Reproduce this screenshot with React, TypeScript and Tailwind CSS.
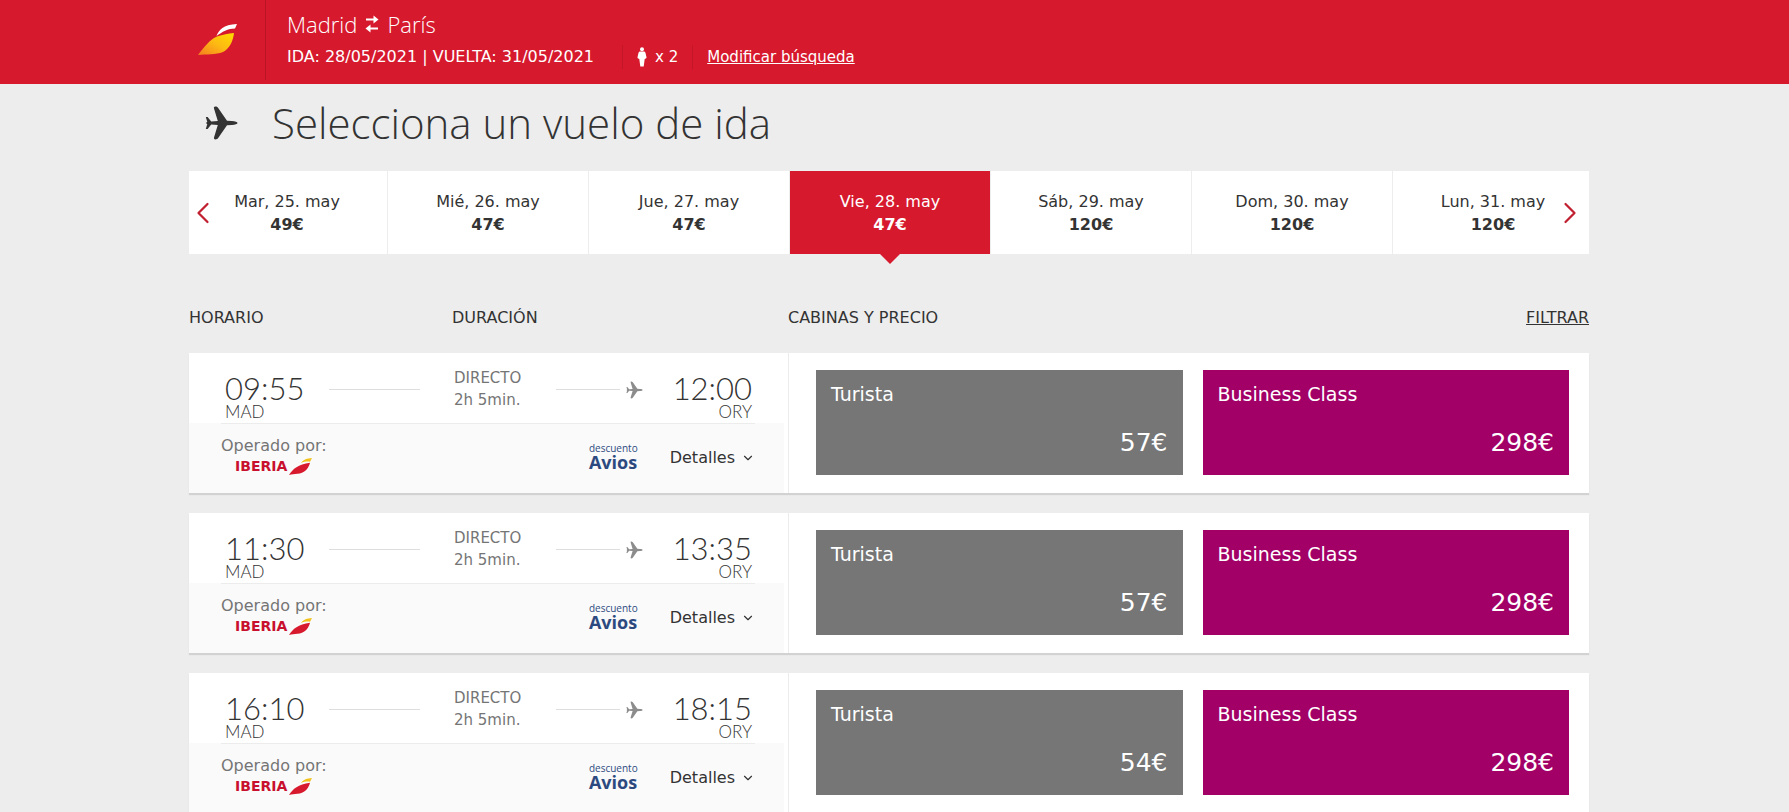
import { ChevronDown, ChevronLeft, ChevronRight } from "lucide-react";

interface Flight {
  departure: string;
  arrival: string;
  duration: string;
  economy: string;
  business: string;
}

const days = [
  { label: "Mar, 25. may", price: "49€" },
  { label: "Mié, 26. may", price: "47€" },
  { label: "Jue, 27. may", price: "47€" },
  { label: "Vie, 28. may", price: "47€", selected: true },
  { label: "Sáb, 29. may", price: "120€" },
  { label: "Dom, 30. may", price: "120€" },
  { label: "Lun, 31. may", price: "120€" },
];

const flights: Flight[] = [
  { departure: "09:55", arrival: "12:00", duration: "2h 5min.", economy: "57€", business: "298€" },
  { departure: "11:30", arrival: "13:35", duration: "2h 5min.", economy: "57€", business: "298€" },
  { departure: "16:10", arrival: "18:15", duration: "2h 5min.", economy: "54€", business: "298€" },
];

function PlaneIcon({ className }: { className?: string }) {
  return (
    <svg viewBox="0 0 33 34" fill="currentColor" className={className} aria-hidden="true">
      <path d="M32.500 17c0-1-2.500-1.900-5.500-2l-5-.2L13.200 2C12.400.9 11.600.6 10.400.6c-1.300 0-1.700.7-1.400 1.800L12.800 14.900l-6.600.5-3.600-4.300H.8l1.500 5c-.7.300-1.300.6-1.300.9s.6.600 1.300.9l-1.500 5h1.800l3.600-4.300 6.600.5L9 31.600c-.3 1.100.1 1.800 1.400 1.800 1.200 0 2-.3 2.800-1.400L22 19.200l5-.2c3-.1 5.500-1 5.500-2z" />
    </svg>
  );
}

function SwapIcon({ className }: { className?: string }) {
  return (
    <svg viewBox="0 0 14 18" className={className} fill="none" stroke="currentColor" strokeWidth="2" aria-hidden="true">
      <path d="M1 4.500h9M4 13.500h9" />
      <path d="M8.500.5v8l5-4zM5.500 9.500v8l-5-4z" fill="currentColor" stroke="none" />
    </svg>
  );
}

function PersonIcon({ className }: { className?: string }) {
  return (
    <svg viewBox="0 0 10 20" fill="currentColor" className={className} aria-hidden="true">
      <circle cx="5" cy="2.200" r="2" />
      <path d="M3.200 4.500h3.600c1 0 1.500.6 1.800 1.800l.9 4c.2.900-.5 1.400-1.300 1.500L7.700 12l-1 7.500H3.300L2.300 12l-.5-.2C1 11.700.3 11.200.5 10.300l.9-4c.3-1.200.8-1.800 1.800-1.800z" />
    </svg>
  );
}

function BrandMark() {
  return (
    <svg viewBox="0 0 40 32" className="h-8 w-10" role="img" aria-label="Iberia">
      <defs>
        <linearGradient id="wing" x1="1" y1="0" x2="0" y2="1">
          <stop offset="0" stopColor="#ffdc00" />
          <stop offset="0.500" stopColor="#fdb913" />
          <stop offset="1" stopColor="#f47b20" />
        </linearGradient>
      </defs>
      <path d="M18.500 12C21 6 25 .8 39 0l-2 4.500C30 4.500 24 8 18.500 12z" fill="#fff" />
      <path d="M0 31C6 23 12 15.500 19 12.500 25 10.500 30 9.500 36 9c-1 9-5 16-11 19-7 3-17 2-25 3z" fill="url(#wing)" />
    </svg>
  );
}

function IberiaLogo() {
  return (
    <div className="flex items-start pl-3.5 text-[#c8102e]">
      <span className="text-[14px] leading-4 font-bold">IBERIA</span>
      <svg viewBox="0 0 23 17" className="ml-0.5 h-[17px] w-[23px]" aria-hidden="true">
        <path d="M12 5C14.500 1.500 18 .3 23 0l-2 3.700c-3.500-.3-6 .1-9 1.300z" fill="#f2c21a" />
        <path d="M0 17C4 11 9 6 21 4.700 19.500 11 15 15.500 8.500 15.800 5 16 3 16.300 0 17z" fill="#d7192d" />
      </svg>
    </div>
  );
}

function FlightCard({ flight }: { flight: Flight }) {
  return (
    <li className="flex bg-white shadow-[0_2px_1px_#d2d2d2]">
      <div className="w-[600px] shrink-0 border-r border-[#ececec]">
        <div className="flex h-[70px] px-9">
          <div className="w-20 pt-5 font-['Lato'] font-light">
            <p className="text-[31px] leading-[30px]">{flight.departure}</p>
            <p className="text-[17px] leading-[17px]">MAD</p>
          </div>
          <div className="mt-9 ml-6 h-px w-[91px] bg-[#dedede]" />
          <div className="ml-[34px] w-[68px] pt-3.5 text-[15px] leading-[22px] whitespace-nowrap text-[#757575]">
            <p>DIRECTO</p>
            <p>{flight.duration}</p>
          </div>
          <div className="ml-[34px] flex h-[73px] items-center gap-1.5">
            <div className="h-px w-16 bg-[#dedede]" />
            <PlaneIcon className="h-[18px] w-[17px] text-[#8c8c8c]" />
          </div>
          <div className="ml-auto pt-5 text-right font-['Lato'] font-light">
            <p className="text-[31px] leading-[30px]">{flight.arrival}</p>
            <p className="text-[17px] leading-[17px]">ORY</p>
          </div>
        </div>
        <div className="mr-1 h-[70px] bg-[#fafafa] pr-[29px] pl-8">
          <div className="flex h-full items-start justify-between border-t border-[#ececec]">
            <div className="pt-2.5">
              <p className="leading-6 text-[#757575]">Operado por:</p>
              <IberiaLogo />
            </div>
            <div className="flex items-end gap-8 pt-[18px]">
              <p className="flex flex-col font-['Open_Sans'] text-[#2d4a80]">
                <span className="text-[10px] leading-3">descuento</span>
                <span className="text-[18px] leading-4 font-bold">Avios</span>
              </p>
              <button type="button" className="flex items-center gap-1.5">
                Detalles
                <ChevronDown className="h-3.5 w-3.5" strokeWidth={2} />
              </button>
            </div>
          </div>
        </div>
      </div>
      <div className="grid flex-1 grid-cols-2 gap-5 py-[17px] pr-5 pl-[27px]">
        <button
          type="button"
          className="flex h-[105px] flex-col items-start justify-between bg-[#767676] px-[15px] pt-2.5 pb-4 text-white"
        >
          <span className="text-[19px] leading-7">Turista</span>
          <span className="self-end text-[25px] leading-8">{flight.economy}</span>
        </button>
        <button
          type="button"
          className="flex h-[105px] flex-col items-start justify-between bg-[#a20067] px-[15px] pt-2.5 pb-4 text-white"
        >
          <span className="text-[19px] leading-7">Business Class</span>
          <span className="self-end text-[25px] leading-8">{flight.business}</span>
        </button>
      </div>
    </li>
  );
}

export default function App() {
  return (
    <div className="h-screen overflow-hidden bg-[#ededed] font-['DejaVu_Sans',sans-serif] text-base text-[#333]">
      <header className="bg-[#d7192d] pr-[11px] text-white">
        <div className="mx-auto flex h-[84px] max-w-[1400px] items-start">
          <div className="flex h-20 w-[77px] items-center border-r border-[#b81426] pl-[9px]">
            <BrandMark />
          </div>
          <div className="pt-2 pl-[21px]">
            <h2 className="flex items-center gap-2 font-['Open_Sans'] text-[22px] leading-8 font-light">
              Madrid
              <SwapIcon className="h-[18px] w-3.5" />
              París
            </h2>
            <div className="flex items-center leading-[34px]">
              <p>IDA: 28/05/2021 | VUELTA: 31/05/2021</p>
              <p className="ml-7 flex h-6 items-center gap-2 border-x border-[#c31629] px-3.5 text-[15px]">
                <PersonIcon className="h-5 w-2.5" />x 2
              </p>
              <a href="#buscar" className="ml-3.5 text-[15px] underline">
                Modificar búsqueda
              </a>
            </div>
          </div>
        </div>
      </header>

      <main className="pr-[11px]">
        <div className="mx-auto max-w-[1400px]">
          <div className="flex h-[87px] items-center gap-[34px] pb-2.5 pl-4">
            <PlaneIcon className="h-[34px] w-[33px]" />
            <h1 className="font-['Open_Sans'] text-[42px] leading-[56px] font-light">Selecciona un vuelo de ida</h1>
          </div>

          <nav className="relative overflow-x-clip" aria-label="Fechas">
            <div className="-mr-1 -ml-0.5 flex gap-px">
              {days.map((day) => (
                <button
                  type="button"
                  key={day.label}
                  className={
                    day.selected
                      ? "relative h-[83px] flex-1 bg-[#d7192d] leading-[23px] text-white"
                      : "h-[83px] flex-1 bg-white leading-[23px]"
                  }
                >
                  <span className="block">{day.label}</span>
                  <span className="block font-bold">{day.price}</span>
                  {day.selected && (
                    <span className="absolute top-full left-1/2 -translate-x-1/2 border-x-10 border-t-10 border-x-transparent border-t-[#d7192d]" />
                  )}
                </button>
              ))}
            </div>
            <button type="button" aria-label="Anterior" className="absolute inset-y-0 -left-1 text-[#c0202f]">
              <ChevronLeft className="h-9 w-9" strokeWidth={1.5} />
            </button>
            <button type="button" aria-label="Siguiente" className="absolute inset-y-0 right-px text-[#c0202f]">
              <ChevronRight className="h-9 w-9" strokeWidth={1.5} />
            </button>
          </nav>

          <div className="flex pt-[52px] pb-[23px] leading-6">
            <p className="w-[263px]">HORARIO</p>
            <p className="w-[336px]">DURACIÓN</p>
            <p className="flex-1">CABINAS Y PRECIO</p>
            <button type="button" className="underline">
              FILTRAR
            </button>
          </div>

          <ul className="flex flex-col gap-5">
            {flights.map((flight) => (
              <FlightCard key={flight.departure} flight={flight} />
            ))}
          </ul>
        </div>
      </main>
    </div>
  );
}
